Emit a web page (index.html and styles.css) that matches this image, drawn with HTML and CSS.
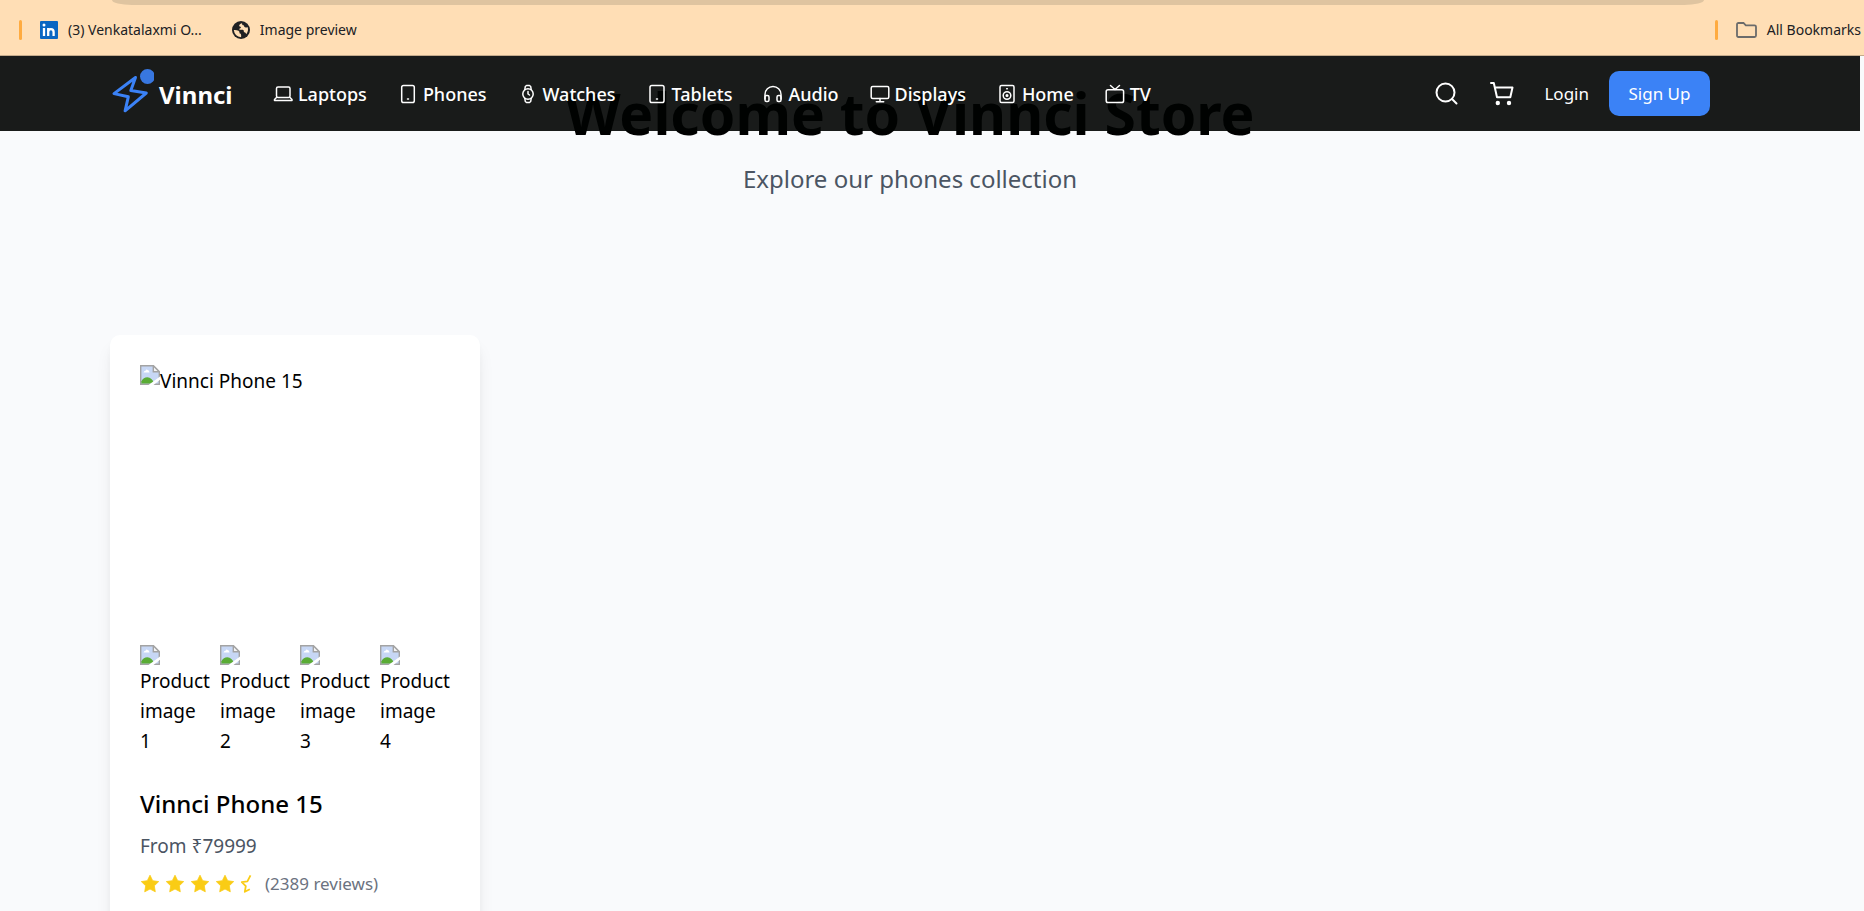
FILE: index.html
```html
<!DOCTYPE html>
<html lang="en">
<head>
<meta charset="utf-8">
<title>Vinnci Store</title>
<link rel="stylesheet" href="styles.css">
</head>
<body>
<svg class="defs" aria-hidden="true">
  <symbol id="broken" viewBox="0 0 20 20">
    <path d="M.7.7h12.6l6 6v12.6H.7z" fill="#c7d7f5" stroke="#a3a3a3" stroke-width="1.4"/>
    <path d="M3.500 7.500q.3-1.800 2-1.800.8-2 2.200-.6 1.600.4 1.800 2.400z" fill="#fff"/>
    <path d="M1.400 18.600v-2.400q2-3.700 6-3.900 4.500.2 6.800 6.300z" fill="#5aac35"/>
    <path d="M13.300.7v6h6z" fill="#f4f4f4" stroke="#a3a3a3" stroke-width="1.400"/>
    <path d="M20 11.500v3.300L13.500 20H8.500z" fill="#fff"/>
  </symbol>
  <symbol id="star" viewBox="0 0 20 20">
    <path d="M10 1.200l2.700 5.500 6 .9-4.400 4.200 1 6L10 15l-5.300 2.800 1-6L1.300 7.600l6-.9z" fill="#facc15" stroke="#facc15" stroke-width=".8" stroke-linejoin="round"/>
  </symbol>
</svg>

<header class="toolbar">
  <div class="address"></div>
  <div class="bookmarks">
    <span class="divider"></span>
    <a class="bookmark" href="#">
      <svg width="18" height="18" viewBox="0 0 18 18"><rect width="18" height="18" rx="1" fill="#0a66c2"/><path d="M4 7v8M8.200 7v8M8.200 11q0-2.800 2.700-2.800T13.600 11v4" fill="none" stroke="#fff" stroke-width="2.300"/><circle cx="4" cy="4.100" r="1.500" fill="#fff"/></svg>
      <span>(3) Venkatalaxmi O...</span>
    </a>
    <a class="bookmark" href="#">
      <svg width="18" height="18" viewBox="0 0 18 18"><circle cx="9" cy="9" r="9" fill="#202124"/><path d="M10 2.200Q6.800 3 7.200 5.200 9 5.200 9 7q-2 .2-1.700 1.800h3.600q1.200.6 1 2.200 2 .2 2.400 2.200Q17 9.500 15.500 6q-2 1.200-3.200-.2Q12.600 4 10.400 4zM1.800 9q2.700-.3 4.700.8 1.600 1 .9 2.500 2.200.2 1.700 3.900Q2.600 15.500 1.800 9z" fill="#ffdeb5"/></svg>
      <span>Image preview</span>
    </a>
    <span class="divider divider-end"></span>
    <a class="bookmark" href="#">
      <svg width="21" height="16" viewBox="0 0 21 16" fill="none" stroke="#6b6b6b" stroke-width="1.800"><path d="M1 2.500Q1 1 2.500 1h5l2.300 2.400h8.700q1.500 0 1.500 1.400v8.700q0 1.500-1.500 1.500h-16Q1 15 1 13.500z"/></svg>
      <span>All Bookmarks</span>
    </a>
  </div>
</header>

<div class="page">
  <nav class="nav">
    <div class="nav-inner">
      <a class="brand" href="#">
        <svg width="44" height="58" viewBox="0 0 44 58"><path d="M25.500 12.500L4 28.600l14.300 3.200-3.200 14L36.300 28 20.800 25.400z" fill="none" stroke="#3b82f6" stroke-width="3" stroke-linejoin="round"/><circle cx="37.500" cy="11.500" r="7.500" fill="#3877e0"/></svg>
        <span>Vinnci</span>
      </a>
      <div class="links">
        <a href="#"><svg viewBox="0 0 20 20"><rect x="3.500" y="3" width="13.500" height="10.500" rx="1.500"/><path d="M3.500 13.500L1.500 15.500v1h17.500v-1l-2-2"/></svg>Laptops</a>
        <a href="#"><svg viewBox="0 0 20 20"><rect x="3.700" y="1.500" width="12.600" height="17" rx="1.800"/><path d="M9.500 15h1"/></svg>Phones</a>
        <a href="#"><svg viewBox="0 0 20 20"><circle cx="10" cy="10" r="5.200"/><path d="M6.800 5.500l.5-3 1.200-1h3l1.200 1 .5 3M6.800 14.500l.5 3 1.200 1h3l1.200-1 .5-3M10 7.500V10l1.500 1"/></svg>Watches</a>
        <a href="#"><svg viewBox="0 0 20 20"><rect x="3" y="1.500" width="14" height="17" rx="1.800"/><path d="M9.500 15h1"/></svg>Tablets</a>
        <a href="#"><svg viewBox="0 0 20 20"><path d="M2 15v-4.500a8 8 0 0 1 16 0V15"/><rect x="2" y="11.500" width="4" height="6" rx="1.500"/><rect x="14" y="11.500" width="4" height="6" rx="1.500"/></svg>Audio</a>
        <a href="#"><svg viewBox="0 0 20 20"><rect x="1.200" y="2.500" width="17.600" height="12" rx="1.500"/><path d="M10 14.500v3M6.300 17.700h7.400"/></svg>Displays</a>
        <a href="#"><svg viewBox="0 0 20 20"><rect x="3" y="1.500" width="14" height="17" rx="1.500"/><circle cx="10" cy="11.500" r="3.800"/><circle cx="10" cy="11.500" r=".8"/><path d="M9.700 4.800h.6"/></svg>Home</a>
        <a href="#"><svg viewBox="0 0 20 20"><rect x="1.200" y="5.800" width="17.400" height="12.700" rx="1.800"/><path d="M5.500 1.500L10 5.500l4.500-4"/></svg>TV</a>
      </div>
      <div class="actions">
        <button class="icon-btn" aria-label="Search"><svg width="25" height="25" viewBox="0 0 25 25"><circle cx="11.500" cy="11.500" r="9"/><path d="M18 18l4.500 4.500"/></svg></button>
        <button class="icon-btn" aria-label="Cart"><svg width="25" height="25" viewBox="0 0 25 25"><path d="M2 2h2.800l3.200 14.300h13.300L23.500 6.500H6"/><circle cx="8.800" cy="22" r="1.200" fill="#fff"/><circle cx="20" cy="22" r="1.200" fill="#fff"/></svg></button>
        <a class="login" href="#">Login</a>
        <button class="signup">Sign Up</button>
      </div>
    </div>
  </nav>

  <main class="content">
    <section class="hero">
      <h1>Welcome to Vinnci Store</h1>
      <p>Explore our phones collection</p>
    </section>
    <section class="grid">
      <article class="card">
        <div class="photo"><svg class="broken"><use href="#broken"/></svg><span>Vinnci Phone 15</span></div>
        <div class="thumbs">
          <div><svg class="broken"><use href="#broken"/></svg><span>Product image 1</span></div>
          <div><svg class="broken"><use href="#broken"/></svg><span>Product image 2</span></div>
          <div><svg class="broken"><use href="#broken"/></svg><span>Product image 3</span></div>
          <div><svg class="broken"><use href="#broken"/></svg><span>Product image 4</span></div>
        </div>
        <h2>Vinnci Phone 15</h2>
        <p class="price">From ₹79999</p>
        <div class="rating">
          <svg><use href="#star"/></svg>
          <svg><use href="#star"/></svg>
          <svg><use href="#star"/></svg>
          <svg><use href="#star"/></svg>
          <svg viewBox="0 0 20 20" fill="none" stroke="#facc15" stroke-width="1.800" stroke-linejoin="round"><path d="M10.500 1.300L7.400 7.400l-5.600.8 4 3.900-1 5.700 5-2.500"/></svg>
          <span>(2389 reviews)</span>
        </div>
      </article>
    </section>
  </main>
</div>
</body>
</html>
```
FILE: styles.css
```css
* { box-sizing: border-box; }
body {
  margin: 0;
  height: 100vh;
  display: flex;
  flex-direction: column;
  overflow: hidden;
  font-family: "Noto Sans", "Open Sans", sans-serif;
  font-size: 19px;
  color: #000;
}
a { color: inherit; text-decoration: none; }
button { font: inherit; border: 0; cursor: pointer; }
h1, h2, p { margin: 0; }
.defs { position: absolute; width: 0; height: 0; }

.toolbar {
  flex: none;
  height: 56px;
  background: #ffdeb5;
  border-bottom: 1px solid #c4ab8c;
  color: #202124;
  font-size: 14px;
}
.address {
  height: 5px;
  margin: 0 160px 0 112px;
  background: #dfc4a0;
  border-radius: 0 0 20px 20px / 0 0 5px 5px;
}
.bookmarks {
  display: flex;
  align-items: center;
  height: 49px;
  padding: 0 3px 0 19px;
}
.divider { width: 3px; height: 20px; border-radius: 2px; background: #ffab40; margin-right: 18px; }
.divider-end { margin-left: auto; }
.bookmark { display: flex; align-items: center; gap: 10px; margin-right: 30px; white-space: nowrap; }
.bookmark:last-child { margin-right: 0; }

.page {
  flex: 1;
  min-height: 0;
  position: relative;
  overflow: hidden;
  background: #f9fafc;
}
.nav {
  position: absolute;
  inset: 0 4px auto 0;
  z-index: 2;
  height: 75px;
  padding: 0 150px 0 110px;
  background: rgba(0, 2, 1, .9);
  color: #fff;
}
.nav-inner {
  display: flex;
  align-items: center;
  height: 100%;
  max-width: 1600px;
  margin: 0 auto;
}
.brand { display: flex; align-items: center; gap: 5px; width: 163px; font-size: 24px; font-weight: 700; }
.brand span { padding-top: 2px; }
.links { display: flex; align-items: center; gap: 31px; font-size: 18px; font-weight: 500; }
.links a { display: flex; align-items: center; gap: 5px; }
.links svg { width: 20px; height: 20px; }
.links svg, .icon-btn svg { fill: none; stroke: #fff; stroke-width: 1.5; stroke-linecap: round; stroke-linejoin: round; }
.actions { display: flex; align-items: center; margin-left: auto; font-size: 17px; }
.icon-btn { display: flex; padding: 0; margin-right: 30px; background: none; }
.icon-btn svg { stroke-width: 2; }
.login { margin-right: 20px; }
.signup { width: 101px; height: 45px; padding: 0; border-radius: 10px; background: #3b82f6; color: #fff; }

.content { padding: 20px 154px 0 110px; }
.hero { text-align: center; }
.hero h1 { font-size: 57px; line-height: 75px; font-weight: 700; }
.hero p { margin-top: 10px; font-size: 24px; line-height: 36px; color: #4b5563; }
.grid { display: grid; grid-template-columns: repeat(4, 1fr); gap: 40px; margin-top: 138px; }
.card {
  padding: 30px;
  border-radius: 10px;
  background: #fff;
  box-shadow: 0 12px 18px -4px rgba(0, 0, 0, .1), 0 4px 8px -4px rgba(0, 0, 0, .08);
}
.broken { flex: none; display: block; width: 20px; height: 20px; }
.photo { display: flex; height: 280px; line-height: 32px; }
.thumbs { display: grid; grid-template-columns: repeat(4, 70px); gap: 10px; line-height: 30px; }
.thumbs .broken { margin-bottom: 1px; }
.card h2 { margin-top: 30px; font-size: 24px; line-height: 36px; font-weight: 500; }
.price { margin-top: 9px; line-height: 30px; color: #4b5563; }
.rating { display: flex; align-items: center; gap: 5px; margin-top: 8px; color: #6b7280; font-size: 17px; line-height: 30px; }
.rating svg { width: 20px; height: 20px; }
```
